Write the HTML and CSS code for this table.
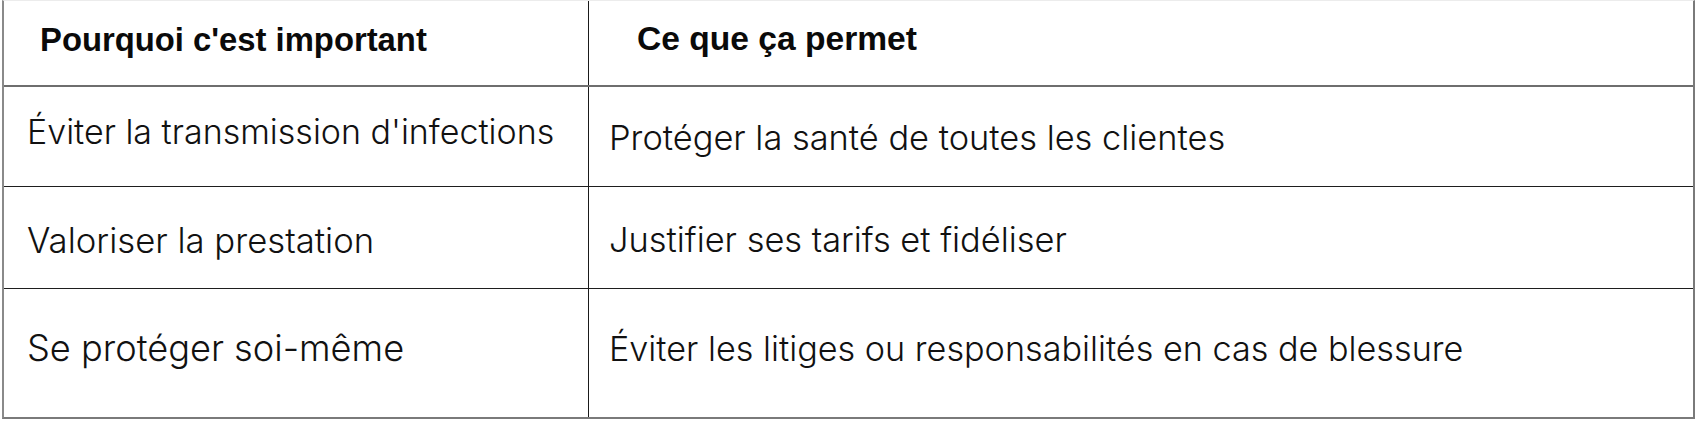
FILE: index.html
```html
<!DOCTYPE html>
<html lang="fr">
<head>
<meta charset="utf-8">
<title>Hygiène</title>
<link rel="stylesheet" href="styles.css">
</head>
<body>
<div class="table">
  <div class="row head">
    <div class="cell left">Pourquoi c'est important</div>
    <div class="cell right">Ce que ça permet</div>
  </div>
  <div class="row r1">
    <div class="cell left">Éviter la transmission d'infections</div>
    <div class="cell right">Protéger la santé de toutes les clientes</div>
  </div>
  <div class="row r2">
    <div class="cell left">Valoriser la prestation</div>
    <div class="cell right">Justifier ses tarifs et fidéliser</div>
  </div>
  <div class="row r3">
    <div class="cell left">Se protéger soi-même</div>
    <div class="cell right">Éviter les litiges ou responsabilités en cas de blessure</div>
  </div>
</div>
</body>
</html>
```
FILE: styles.css
```css
html, body {
  margin: 0;
  padding: 0;
  background: #ffffff;
}

.table {
  margin-left: 2px;
  width: 1693px;
  box-sizing: border-box;
  border-top: 1px solid #ececec;
  border-left: 2px solid #8a8a8a;
  border-right: 2px solid #7a7a7a;
  border-bottom: 2px solid #7a7a7a;
  font-family: "Inter", "Liberation Sans", sans-serif;
  font-weight: 300;
  font-size: 34px;
  color: #111111;
}

.row {
  display: grid;
  grid-template-columns: 585px 1fr;
  box-sizing: border-box;
  border-bottom: 1px solid #1e1e1e;
}

.row:last-child {
  border-bottom: none;
}

.cell {
  display: flex;
  align-items: center;
  box-sizing: border-box;
  white-space: nowrap;
}

.cell.left {
  border-right: 1px solid #1a1a1a;
  padding-left: 23px;
}

.cell.right {
  padding-left: 20px;
  font-size: 34.4px;
}

.head {
  height: 86px;
  border-bottom: 2px solid #6e6e6e;
}

.head .cell {
  font-family: "Liberation Sans", Arial, sans-serif;
  font-weight: 700;
  font-size: 32.8px;
  color: #0a0a0a;
}

.head .cell.left {
  padding-left: 36px;
  padding-bottom: 6px;
}

.head .cell.right {
  padding-left: 48px;
  padding-bottom: 9px;
  font-size: 33.6px;
}

.r1 {
  height: 100px;
}

.r1 .cell.left {
  padding-bottom: 10px;
}

.r1 .cell.right {
  padding-top: 1px;
}

.r2 {
  height: 102px;
}

.r2 .cell {
  padding-top: 4px;
}

.r2 .cell.left {
  font-size: 34.7px;
}

.r3 {
  height: 128px;
}

.r3 .cell {
  padding-bottom: 10px;
}

.r3 .cell.left {
  font-size: 36.2px;
}

.r3 .cell.right {
  font-size: 34.2px;
}
```
